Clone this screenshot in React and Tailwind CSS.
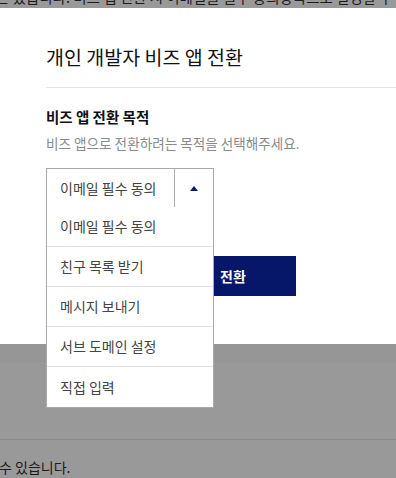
export default function App() {
  const items = ["이메일 필수 동의", "친구 목록 받기", "메시지 보내기", "서브 도메인 설정", "직접 입력"];
  return (
    <div
      className="w-[396px] h-[478px] overflow-hidden bg-[#999999] flex flex-col"
      style={{ fontFamily: '"Noto Sans CJK KR", "Noto Sans", sans-serif' }}
    >
      <div className="h-[8px] overflow-hidden shrink-0">
        <p className="text-[14.5px] leading-[20px] -mt-[13px] -ml-[4px] whitespace-nowrap text-[#1c1c1c]">
          는 있습니다. 비즈 앱 전환 시 이메일을 필수 동의항목으로 설정할 수 있고
        </p>
      </div>
      <div className="h-[336px] shrink-0 bg-white pl-[46px] pt-[35px] relative">
        <h1 className="text-[19.5px] leading-[28px] text-[#111111] font-normal">개인 개발자 비즈 앱 전환</h1>
        <div className="mt-[16px] h-px bg-[#e4e4e4]" />
        <h2 className="mt-[18px] text-[14.5px] leading-[22px] font-bold text-[#111111]">비즈 앱 전환 목적</h2>
        <p className="mt-[5px] text-[13.6px] leading-[20px] text-[#8a8a8a]">비즈 앱으로 전환하려는 목적을 선택해주세요.</p>
        <div className="relative mt-[15px] w-[168px] h-[40px] border border-[#aaaaaa] flex z-10 bg-white">
          <div className="flex-1 flex items-center pl-[13px] text-[14px] text-[#444444] border-r border-[#aaaaaa]">
            이메일 필수 동의
          </div>
          <div className="w-[38px] flex items-center justify-center">
            <svg width="8" height="5" viewBox="0 0 8 5">
              <polygon points="4,0 8,5 0,5" fill="#0b1a6e" />
            </svg>
          </div>
          <ul className="absolute left-[-1px] top-[38px] w-[168px] bg-white border border-[#aaaaaa] border-t-0">
            {items.map((it, i) => (
              <li
                key={it}
                className={`h-[40px] flex items-center pl-[13px] text-[14px] text-[#444444] ${i < items.length - 1 ? "border-b border-[#e2e2e2]" : ""}`}
              >
                {it}
              </li>
            ))}
          </ul>
        </div>
        <div className="mt-[48px] ml-[124px] w-[126px] h-[40px] bg-[#061669] text-white text-[14px] font-bold flex items-center justify-center">
          전환
        </div>
      </div>
      <div className="h-[18px] shrink-0 bg-[#959695]" />
      <div className="h-[78px] shrink-0 border-b border-[#888888]" />
      <p className="mt-[17px] -ml-[1px] text-[14px] leading-[20px] text-[#1c1c1c] whitespace-nowrap">수 있습니다.</p>
    </div>
  );
}
